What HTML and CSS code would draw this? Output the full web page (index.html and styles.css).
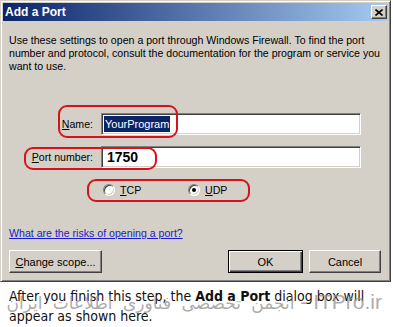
FILE: index.html
```html
<!DOCTYPE html>
<html lang="en">
<head>
  <meta charset="UTF-8" />
  <meta name="viewport" content="width=device-width, initial-scale=1.0" />
  <title>Add a Port</title>
  <link rel="stylesheet" href="styles.css">
</head>
<body>
  <div class="window">
    <div class="titlebar">
      <span class="title">Add a Port</span>
      <span class="close">
        <svg width="8" height="7" viewBox="0 0 8 7">
          <path d="M0.5 0.5 L7.5 6.5 M7.5 0.5 L0.5 6.5" stroke="#000" stroke-width="1.6" />
        </svg>
      </span>
    </div>

    <div class="content">
      <p class="intro">Use these settings to open a port through Windows Firewall. To find the port number and protocol, consult the documentation for the program or service you want to use.</p>

      <div class="fields">
        <div class="row">
          <label class="lbl"><u>N</u>ame:</label>
          <div class="input"><span class="selected">YourProgram</span></div>
        </div>
        <div class="row">
          <label class="lbl"><u>P</u>ort number:</label>
          <div class="input"><span class="port">1750</span></div>
        </div>
        <div class="radios">
          <span class="radio"></span><span class="radio-label"><u>T</u>CP</span>
          <span class="radio checked"></span><span class="radio-label"><u>U</u>DP</span>
        </div>
      </div>

      <a class="link" href="#">What are the risks of opening a port?</a>

      <div class="buttons">
        <span class="btn wide"><u>C</u>hange scope...</span>
        <span class="spacer"></span>
        <span class="btn default">OK</span>
        <span class="btn">Cancel</span>
      </div>
    </div>

    <!-- red annotation marks drawn over the dialog -->
    <span class="mark mark-name"></span>
    <span class="mark mark-port"></span>
    <span class="mark mark-proto"></span>
  </div>

  <div class="caption">
    <p>After you finish this step, the <strong>Add a Port</strong> dialog box will appear as shown here.</p>
    <span class="watermark"><span dir="rtl" class="fa">انجمن تخصصی فناوری اطلاعات ایران</span> - ITPro.ir</span>
  </div>
</body>
</html>
```

FILE: styles.css
```css
:root {
  --face: #d4d0c8;
  --shadow: #808080;
  --dark: #404040;
  --title-from: #0a246a;
  --title-to: #a6caf0;
  --mark: #d8121c;
}

* {
  margin: 0;
  padding: 0;
  box-sizing: border-box;
}

body {
  background: #fff;
  font-family: 'Liberation Sans', Arial, sans-serif;
  font-size: 10.6px;
  color: #000;
  width: 393px;
  overflow: hidden;
}

.window {
  position: relative;
  width: 391px;
  background: var(--face);
  border: 1px solid;
  border-color: var(--face) var(--dark) var(--dark) var(--face);
  box-shadow: inset 1px 1px #fff, inset -1px -1px var(--shadow);
  padding: 2px;
}

.titlebar {
  height: 18px;
  display: flex;
  align-items: center;
  justify-content: space-between;
  padding: 0 1px 0 2px;
  background: linear-gradient(to right, var(--title-from), var(--title-to));
}

.title {
  color: #fff;
  font-weight: bold;
  font-size: 12px;
}

.close {
  width: 16px;
  height: 14px;
  display: flex;
  align-items: center;
  justify-content: center;
  background: var(--face);
  border: 1px solid;
  border-color: #fff var(--dark) var(--dark) #fff;
  box-shadow: inset -1px -1px var(--shadow);
}

.content {
  padding: 13px 7px 6px 6px;
}

.intro {
  line-height: 13px;
}

.fields {
  margin-top: 40px;
}

.row {
  display: flex;
  align-items: center;
  gap: 8px;
  margin-bottom: 11px;
}

.lbl {
  width: 84px;
  text-align: right;
}

.input {
  width: 260px;
  height: 22px;
  display: flex;
  align-items: center;
  padding-left: 2px;
  background: #fff;
  border: 1px solid;
  border-color: var(--shadow) #fff #fff var(--shadow);
  box-shadow: inset 1px 1px var(--dark), inset -1px -1px var(--face);
}

.selected {
  background: var(--title-from);
  color: #fff;
  font-size: 11px;
  line-height: 16px;
  padding: 0 1px;
}

.port {
  font-weight: bold;
  font-size: 14px;
  padding-left: 3px;
}

.radios {
  display: flex;
  align-items: center;
  margin: 15px 0 0 94px;
  height: 13px;
}

.radio {
  position: relative;
  width: 12px;
  height: 12px;
  border-radius: 50%;
  background: #fff;
  border: 1px solid;
  border-color: var(--shadow) #fff #fff var(--shadow);
  box-shadow: inset 1px 1px var(--dark), inset -1px -1px var(--face);
}

.radio.checked::after {
  content: '';
  position: absolute;
  left: 3px;
  top: 3px;
  width: 4px;
  height: 4px;
  border-radius: 50%;
  background: #000;
}

.radio-label {
  margin-left: 5px;
  width: 68px;
}

.link {
  display: block;
  margin-top: 31px;
  color: #1a1acc;
  line-height: 13px;
}

.buttons {
  display: flex;
  gap: 6px;
  margin-top: 10px;
}

.spacer {
  flex: 1;
}

.btn {
  width: 72px;
  height: 23px;
  display: flex;
  align-items: center;
  justify-content: center;
  font-size: 11px;
  background: var(--face);
  border: 1px solid;
  border-color: #fff var(--dark) var(--dark) #fff;
  box-shadow: inset -1px -1px var(--shadow);
}

.btn.wide {
  width: 93px;
}

.btn.default {
  width: 75px;
  border: 1px solid #000;
  box-shadow: inset 1px 1px #fff, inset -1px -1px var(--dark), inset -2px -2px var(--shadow);
}

.mark {
  position: absolute;
  border: 2px solid var(--mark);
  border-radius: 9px;
}

.mark-name {
  left: 57px;
  top: 104px;
  width: 120px;
  height: 33px;
}

.mark-port {
  left: 23px;
  top: 146px;
  width: 133px;
  height: 23px;
}

.mark-proto {
  left: 86px;
  top: 178px;
  width: 163px;
  height: 23px;
}

.caption {
  position: relative;
  padding: 4px 9px 0 9px;
  font-family: 'DejaVu Sans Condensed', 'DejaVu Sans', Verdana, sans-serif;
  font-size: 14px;
  line-height: 20px;
  color: #111;
}

.watermark {
  position: absolute;
  right: 11px;
  top: 9px;
  font-family: 'Liberation Sans', Arial, sans-serif;
  font-size: 21px;
  line-height: 21px;
  color: rgba(150, 150, 150, 0.8);
  white-space: nowrap;
}

.watermark .fa {
  font-family: 'DejaVu Sans', sans-serif;
  font-size: 17px;
  word-spacing: 5px;
}
```
